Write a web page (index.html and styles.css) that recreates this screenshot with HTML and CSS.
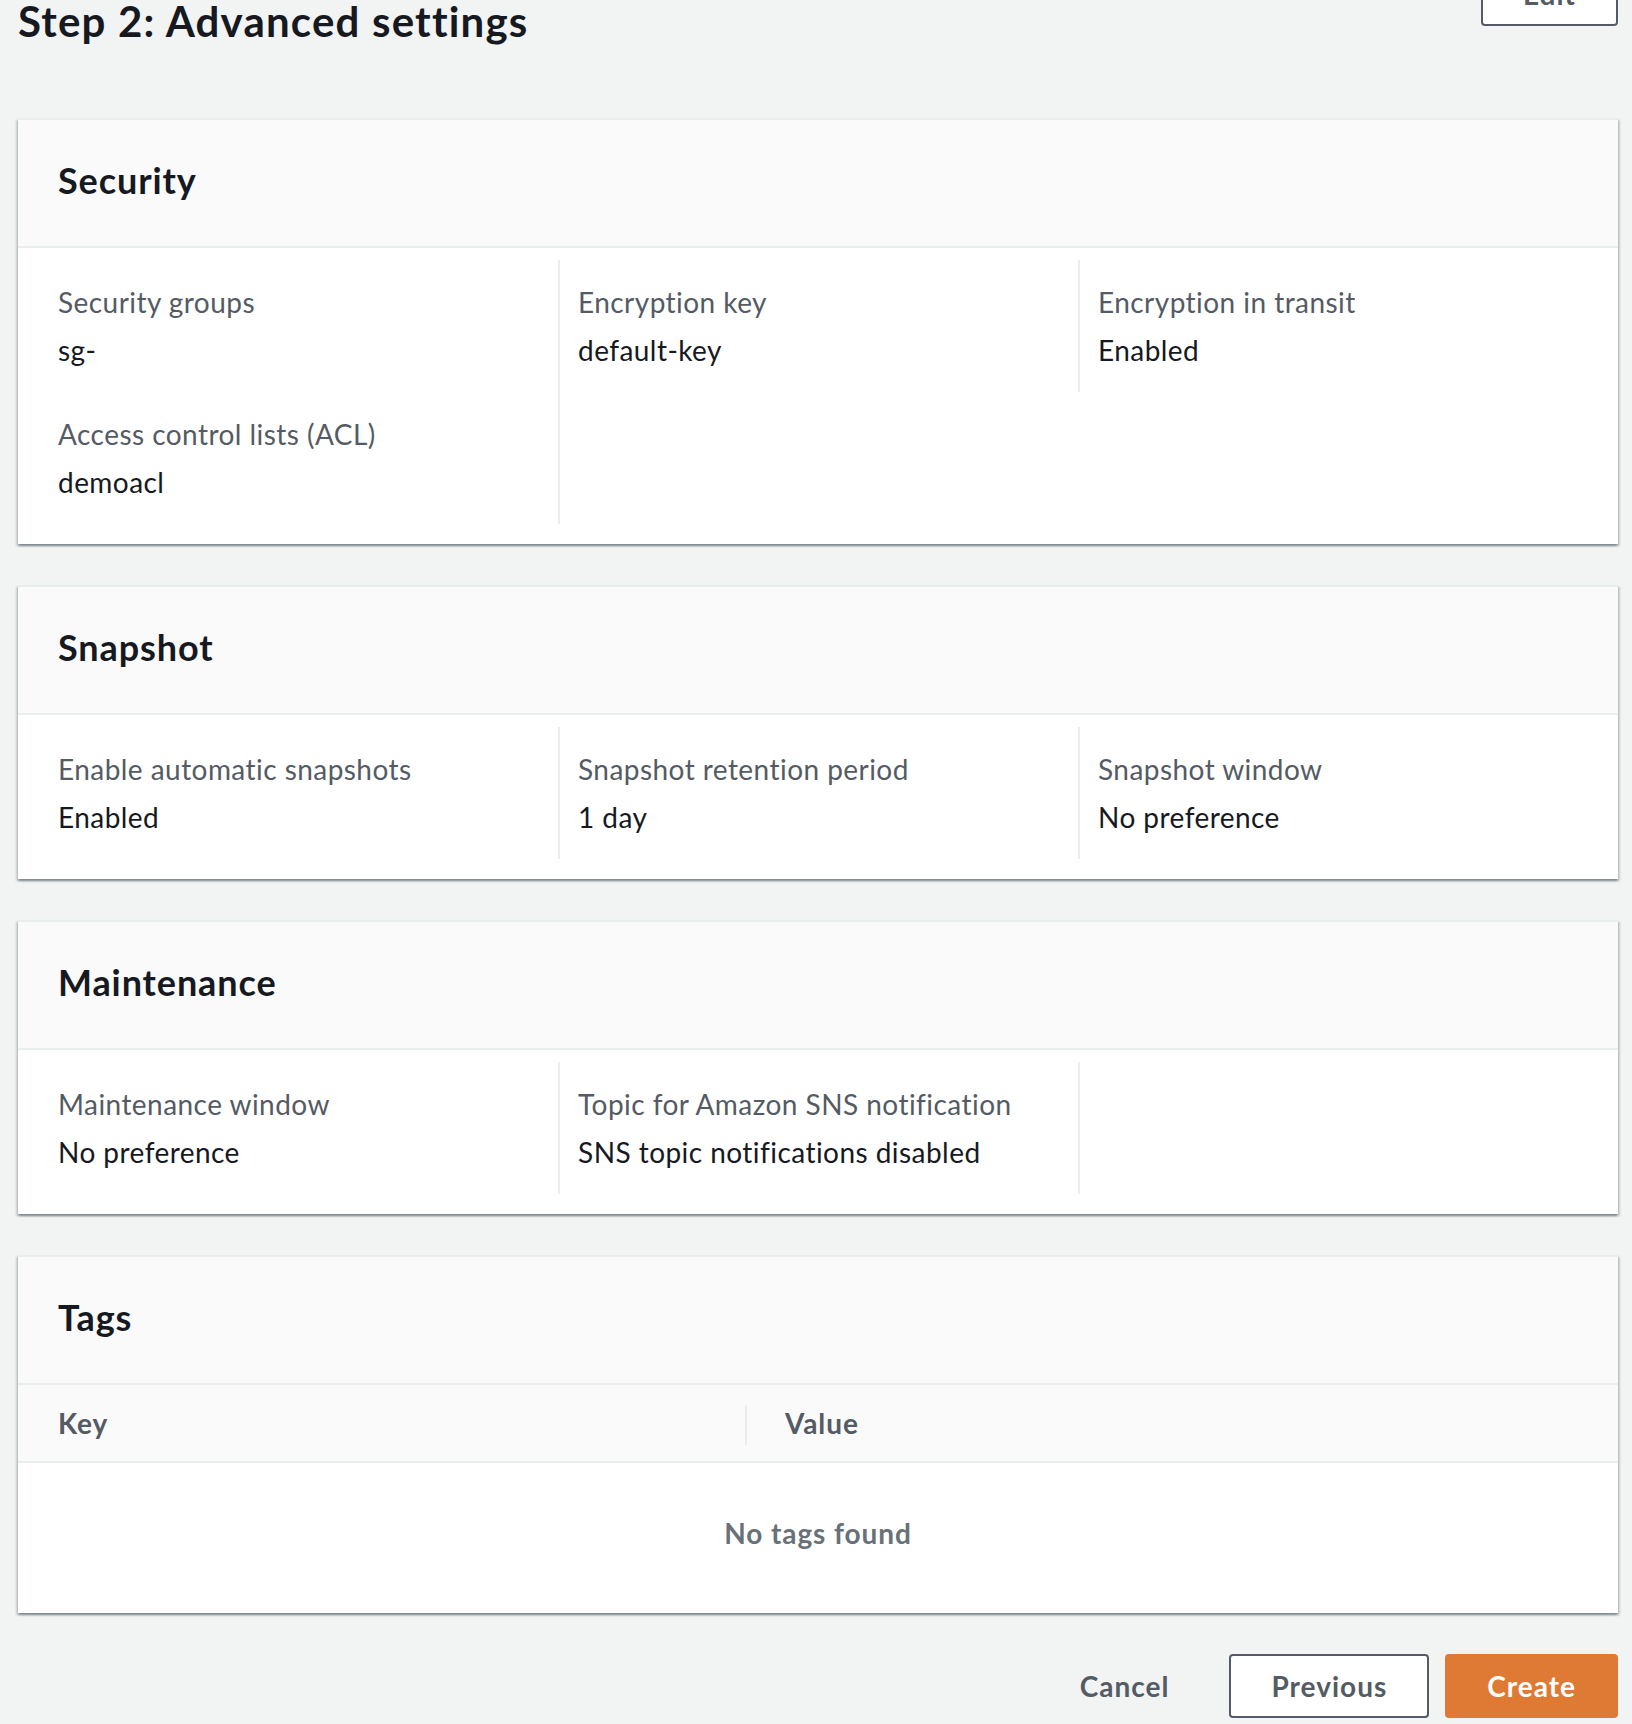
FILE: index.html
```html
<!DOCTYPE html>
<html lang="en">
<head>
<meta charset="utf-8">
<title>Step 2: Advanced settings</title>
<link rel="stylesheet" href="styles.css">
</head>
<body>
<div class="page">
  <div class="page-header">
    <h1 class="page-title">Step 2: Advanced settings</h1>
    <button class="btn btn-normal" type="button">Edit</button>
  </div>

  <section class="panel">
    <div class="panel-header"><h2 class="panel-title">Security</h2></div>
    <div class="panel-body">
      <div class="columns">
        <div class="col">
          <div class="kv">
            <div class="kv-label">Security groups</div>
            <div class="kv-value">sg-</div>
          </div>
          <div class="kv">
            <div class="kv-label">Access control lists (ACL)</div>
            <div class="kv-value">demoacl</div>
          </div>
        </div>
        <div class="col">
          <div class="kv">
            <div class="kv-label">Encryption key</div>
            <div class="kv-value">default-key</div>
          </div>
        </div>
        <div class="col col-start">
          <div class="kv">
            <div class="kv-label">Encryption in transit</div>
            <div class="kv-value">Enabled</div>
          </div>
        </div>
      </div>
    </div>
  </section>

  <section class="panel">
    <div class="panel-header"><h2 class="panel-title">Snapshot</h2></div>
    <div class="panel-body">
      <div class="columns">
        <div class="col">
          <div class="kv">
            <div class="kv-label">Enable automatic snapshots</div>
            <div class="kv-value">Enabled</div>
          </div>
        </div>
        <div class="col">
          <div class="kv">
            <div class="kv-label">Snapshot retention period</div>
            <div class="kv-value">1 day</div>
          </div>
        </div>
        <div class="col">
          <div class="kv">
            <div class="kv-label">Snapshot window</div>
            <div class="kv-value">No preference</div>
          </div>
        </div>
      </div>
    </div>
  </section>

  <section class="panel">
    <div class="panel-header"><h2 class="panel-title">Maintenance</h2></div>
    <div class="panel-body">
      <div class="columns">
        <div class="col">
          <div class="kv">
            <div class="kv-label">Maintenance window</div>
            <div class="kv-value">No preference</div>
          </div>
        </div>
        <div class="col">
          <div class="kv">
            <div class="kv-label">Topic for Amazon SNS notification</div>
            <div class="kv-value">SNS topic notifications disabled</div>
          </div>
        </div>
        <div class="col"></div>
      </div>
    </div>
  </section>

  <section class="panel">
    <div class="panel-header"><h2 class="panel-title">Tags</h2></div>
    <div class="tags-table">
      <div class="tags-head">
        <div class="th">Key</div>
        <div class="th th-divided">Value</div>
      </div>
      <div class="tags-empty">No tags found</div>
    </div>
  </section>

  <div class="actions">
    <button class="btn btn-link" type="button">Cancel</button>
    <button class="btn btn-normal" type="button">Previous</button>
    <button class="btn btn-primary" type="button">Create</button>
  </div>
</div>
</body>
</html>
```

FILE: styles.css
```css
* {
  box-sizing: border-box;
}

html, body {
  margin: 0;
  padding: 0;
  background: #f2f3f3;
}

body {
  font-family: Lato, "Liberation Sans", sans-serif;
  font-size: 28px;
  line-height: 44px;
  letter-spacing: 0.45px;
  color: #16191f;
  height: 1724px;
  overflow: hidden;
}

.page {
  padding: 0 14px 0 18px;
}

.page-header {
  display: flex;
  justify-content: space-between;
  align-items: flex-start;
  margin-top: -38px;
  margin-bottom: 73px;
}

.page-title {
  margin: 35px 0 0;
  font-size: 42px;
  line-height: 48px;
  font-weight: 700;
  letter-spacing: 1.2px;
  color: #16191f;
}

.btn {
  font-family: inherit;
  font-size: 28px;
  line-height: 44px;
  font-weight: 700;
  letter-spacing: 1px;
  padding: 8px 40px;
  border: 2px solid transparent;
  border-radius: 4px;
  background: transparent;
  cursor: pointer;
}

.btn-normal {
  background: #fff;
  border-color: #545b64;
  color: #545b64;
}

.btn-link {
  color: #545b64;
  margin-right: 2px;
}

.btn-primary {
  background: #df7a35;
  border-color: #df7a35;
  color: #fff;
}

.panel {
  background: #fff;
  border-top: 2px solid #eaeded;
  box-shadow: 0 2px 2px 0 rgba(0, 28, 36, 0.3), 2px 2px 2px 0 rgba(0, 28, 36, 0.15), -2px 2px 2px 0 rgba(0, 28, 36, 0.15);
  margin-bottom: 41px;
}

.panel-header {
  background: #fafafa;
  border-bottom: 2px solid #eaeded;
  padding: 38px 40px 44px;
}

.panel-title {
  margin: 0;
  font-size: 36px;
  line-height: 44px;
  font-weight: 700;
  letter-spacing: 0.9px;
  color: #16191f;
}

.panel-body {
  padding: 12px 20px 20px;
}

.columns {
  display: grid;
  grid-template-columns: repeat(3, 520px);
}

.col {
  padding: 20px;
}

.col + .col {
  border-left: 2px solid #eaeded;
  padding-left: 18px;
}

.col-start {
  align-self: start;
}

.kv + .kv {
  margin-top: 40px;
}

.kv-label {
  color: #545b64;
  margin-bottom: 4px;
}

.kv-value {
  color: #16191f;
}

.tags-table {
  display: flex;
  flex-direction: column;
}

.tags-head {
  display: grid;
  grid-template-columns: 727px 1fr;
  background: #fafafa;
  border-bottom: 2px solid #eaeded;
}

.th {
  font-weight: 700;
  letter-spacing: 0.9px;
  color: #545b64;
  padding: 16px 40px;
}

.th-divided {
  position: relative;
}

.th-divided::before {
  content: "";
  position: absolute;
  left: 0;
  top: 20px;
  bottom: 16px;
  border-left: 2px solid #eaeded;
}

.tags-empty {
  text-align: center;
  font-weight: 700;
  letter-spacing: 0.9px;
  color: #687078;
  padding: 48px 0 58px;
}

.actions {
  display: flex;
  justify-content: flex-end;
  align-items: center;
  gap: 16px;
  margin-top: 35px;
}
```
